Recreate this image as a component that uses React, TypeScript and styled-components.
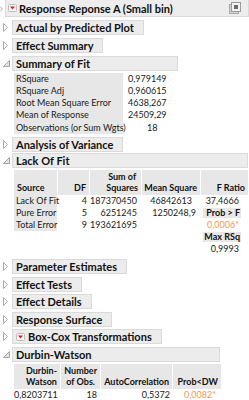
import React from 'react'
import styled, { createGlobalStyle } from 'styled-components'

const GlobalStyle = createGlobalStyle`
	html, body {
		margin: 0;
		padding: 0;
		background: #fff;
	}
	body {
		font-family: Lato, 'Open Sans', 'Liberation Sans', sans-serif;
		font-size: 9px;
		color: #1a1a1a;
	}
`

const Page = styled.div`
	width: 249px;
	height: 400px;
	overflow: hidden;
	background: #fff;
`

const TopRow = styled.div`
	display: flex;
	align-items: stretch;
	height: 17px;
`

const EdgeMark = styled.div`
	width: 5px;
	display: flex;
	align-items: center;
`

const TopBar = styled.div`
	flex: 1;
	display: flex;
	align-items: center;
	gap: 2px;
	padding: 0 7px 0 2px;
	background: #ededed;
	border: 1px solid #d9d9d9;
	border-top: none;
	box-sizing: border-box;
	font-weight: 700;
	font-size: 11px;
	color: #111;
`

const Grow = styled.div`
	flex-grow: 1;
`

const Body = styled.div`
	display: flex;
	flex-direction: column;
`

const OutlineRow = styled.div<{ $gap: number }>`
	display: flex;
	align-items: center;
	height: 15px;
	margin-top: ${p => p.$gap}px;
`

const Toggle = styled.div`
	width: 12px;
	display: flex;
	align-items: center;
	padding-left: 3px;
	box-sizing: border-box;
`

const TitleBar = styled.div<{ $width?: number }>`
	display: flex;
	align-items: center;
	gap: 3px;
	height: 15px;
	padding: 0 9px 0 3px;
	width: ${p => (p.$width ? `${p.$width}px` : 'auto')};
	box-sizing: border-box;
	background: #ececec;
	border: 1px solid #dadada;
	font-weight: 700;
	font-size: 11px;
	color: #111;
	white-space: nowrap;
`

const FitTable = styled.div`
	display: grid;
	grid-template-columns: 109px auto;
	margin: 1.5px 0 0 14px;
	width: 150px;
`

const FitLabel = styled.div`
	background: #e7e7e7;
	line-height: 12.3px;
	padding-left: 2px;
	white-space: nowrap;
`

const FitValue = styled.div<{ $indent?: number }>`
	line-height: 12.3px;
	padding-left: ${p => p.$indent ?? 5}px;
`

const Grid = styled.div<{ $cols: string }>`
	display: grid;
	grid-template-columns: ${p => p.$cols};
	column-gap: 1px;
	margin: 2px 0 0 14px;
	width: max-content;
`

const HeadCell = styled.div<{ $left?: boolean }>`
	background: #e7e7e7;
	display: flex;
	align-items: flex-end;
	justify-content: ${p => (p.$left ? 'flex-start' : 'flex-end')};
	padding: 1px 3px 1px 3px;
	font-weight: 700;
	line-height: 11.5px;
	color: #111;
	white-space: nowrap;
`

const HeadLines = styled.div`
	display: flex;
	flex-direction: column;
	align-items: center;
`

const RowLabel = styled.div`
	background: #e7e7e7;
	line-height: 12px;
	padding-left: 2px;
	white-space: nowrap;
`

const NumCell = styled.div<{ $pad?: number; $warn?: boolean }>`
	text-align: right;
	line-height: 12px;
	padding-right: ${p => p.$pad ?? 3}px;
	color: ${p => (p.$warn ? '#f0995a' : 'inherit')};
	white-space: nowrap;
`

const Blank = styled.div``

const SubHead = styled.div`
	margin: 1px 7px 1px 2px;
	background: #e7e7e7;
	font-weight: 700;
	line-height: 10px;
	text-align: right;
	padding-right: 1px;
	color: #111;
	white-space: nowrap;
`

const ClosedIcon = () => (
	<svg width="5" height="9" viewBox="0 0 5 9">
		<path d="M0.5 0.5 L4.5 4.5 L0.5 8.5 Z" fill="#fff" stroke="#a0a0a0" strokeWidth="0.9" />
	</svg>
)

const OpenIcon = () => (
	<svg width="7" height="7" viewBox="0 0 7 7">
		<path d="M6.5 0.5 L6.5 6.5 L0.5 6.5 Z" fill="#e4e4e4" stroke="#9a9a9a" strokeWidth="0.9" />
	</svg>
)

const MenuIcon = () => (
	<svg width="9" height="8" viewBox="0 0 9 8">
		<rect x="0.5" y="0.5" width="8" height="7" rx="1" fill="#f6f6f6" stroke="#bdbdbd" />
		<path d="M2 2.6 L7 2.6 L4.5 5.4 Z" fill="#d2202c" />
	</svg>
)

const RestoreIcon = () => (
	<svg width="12" height="12" viewBox="0 0 12 12">
		<rect x="0.5" y="2.5" width="9" height="9" fill="#d6d6d6" stroke="#a8a8a8" />
		<rect x="2.5" y="0.5" width="9" height="9" fill="#f2f2f2" stroke="#9a9a9a" />
		<rect x="5" y="3" width="4" height="4" fill="#6a6a6a" />
	</svg>
)

interface OutlineProps {
	title: string
	open?: boolean
	menu?: boolean
	width?: number
	gap?: number
}

const Outline: React.FC<OutlineProps> = ({ title, open, menu, width, gap = 3 }) => (
	<OutlineRow $gap={gap}>
		<Toggle>{open ? <OpenIcon /> : <ClosedIcon />}</Toggle>
		<TitleBar $width={width}>
			{menu && <MenuIcon />}
			{title}
		</TitleBar>
	</OutlineRow>
)

const TwoLine: React.FC<{ top: string; bottom: string }> = ({ top, bottom }) => (
	<HeadLines>
		<span>{top}</span>
		<span>{bottom}</span>
	</HeadLines>
)

const App: React.FC = () => {
	return (
		<Page>
			<GlobalStyle />
			<TopRow>
				<EdgeMark>
					<svg width="3" height="6" viewBox="0 0 3 6">
						<path d="M0 0.5 L2.5 3 L0 5.5" fill="none" stroke="#a0a0a0" strokeWidth="0.9" />
					</svg>
				</EdgeMark>
				<TopBar>
					<MenuIcon />
					Response Reponse A (Small bin)
					<Grow />
					<RestoreIcon />
				</TopBar>
			</TopRow>
			<Body>
				<Outline title="Actual by Predicted Plot" />
				<Outline title="Effect Summary" />
				<Outline title="Summary of Fit" open width={166} />
				<FitTable>
					<FitLabel>RSquare</FitLabel>
					<FitValue>0,979149</FitValue>
					<FitLabel>RSquare Adj</FitLabel>
					<FitValue>0,960615</FitValue>
					<FitLabel>Root Mean Square Error</FitLabel>
					<FitValue>4638,267</FitValue>
					<FitLabel>Mean of Response</FitLabel>
					<FitValue>24509,29</FitValue>
					<FitLabel>Observations (or Sum Wgts)</FitLabel>
					<FitValue $indent={24}>18</FitValue>
				</FitTable>
				<Outline title="Analysis of Variance" gap={3} />
				<Outline title="Lack Of Fit" open width={236} gap={1} />
				<Grid $cols="43px 31px 51px 58px 47px">
					<HeadCell $left>Source</HeadCell>
					<HeadCell>DF</HeadCell>
					<HeadCell>
						<TwoLine top="Sum of" bottom="Squares" />
					</HeadCell>
					<HeadCell>Mean Square</HeadCell>
					<HeadCell>F Ratio</HeadCell>

					<RowLabel>Lack Of Fit</RowLabel>
					<NumCell $pad={2}>4</NumCell>
					<NumCell $pad={4}>187370450</NumCell>
					<NumCell $pad={8}>46842613</NumCell>
					<NumCell $pad={9}>37,4666</NumCell>

					<RowLabel>Pure Error</RowLabel>
					<NumCell $pad={2}>5</NumCell>
					<NumCell $pad={4}>6251245</NumCell>
					<NumCell $pad={4}>1250248,9</NumCell>
					<SubHead>Prob &gt; F</SubHead>

					<RowLabel>Total Error</RowLabel>
					<NumCell $pad={2}>9</NumCell>
					<NumCell $pad={4}>193621695</NumCell>
					<Blank />
					<NumCell $pad={9} $warn>
						0,0006*
					</NumCell>

					<Blank />
					<Blank />
					<Blank />
					<Blank />
					<SubHead>Max RSq</SubHead>

					<Blank />
					<Blank />
					<Blank />
					<Blank />
					<NumCell $pad={9}>0,9993</NumCell>
				</Grid>
				<Outline title="Parameter Estimates" gap={4} />
				<Outline title="Effect Tests" gap={2.6} />
				<Outline title="Effect Details" gap={2.6} />
				<Outline title="Response Surface" gap={2.6} />
				<Outline title="Box-Cox Transformations" menu gap={2.6} />
				<Outline title="Durbin-Watson" open width={208} gap={2.6} />
				<Grid $cols="46px 39px 71px 48px">
					<HeadCell>
						<TwoLine top="Durbin-" bottom="Watson" />
					</HeadCell>
					<HeadCell>
						<TwoLine top="Number" bottom="of Obs." />
					</HeadCell>
					<HeadCell>AutoCorrelation</HeadCell>
					<HeadCell>Prob&lt;DW</HeadCell>

					<NumCell $pad={4}>0,8203711</NumCell>
					<NumCell $pad={3}>18</NumCell>
					<NumCell $pad={2}>0,5372</NumCell>
					<NumCell $pad={5} $warn>
						0,0082*
					</NumCell>
				</Grid>
			</Body>
		</Page>
	)
}

export default App
